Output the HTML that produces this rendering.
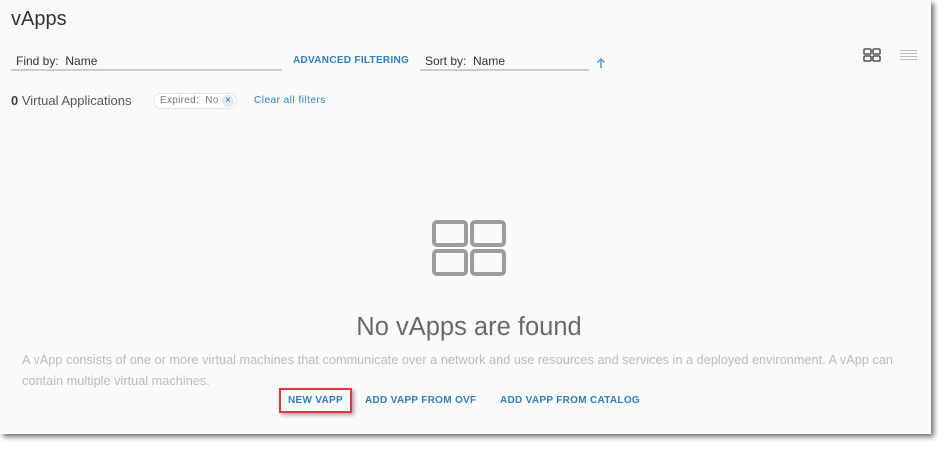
<!DOCTYPE html>
<html><head><meta charset="utf-8"><style>
*{margin:0;padding:0;box-sizing:border-box}
body{width:944px;height:449px;background:#fff;font-family:"Liberation Sans",sans-serif;position:relative;overflow:hidden}
.panel{position:absolute;left:0;top:0;width:931px;height:434px;background:#fafafa;box-shadow:3px 3px 5px rgba(0,0,0,.55)}
.a{position:absolute;white-space:nowrap}
.link{color:#2f7fb8;font-size:10px;letter-spacing:.3px;font-weight:bold}
</style></head><body>
<div class="panel">
<div class="a" style="left:11px;top:8px;font-size:20px;color:#333">vApps</div>
<div class="a" style="left:16px;top:54px;font-size:12px;color:#333">Find by:&nbsp; Name</div>
<div class="a" style="left:11px;top:69px;width:271px;height:2px;background:#ccc"></div>
<div class="a link" style="left:293px;top:55px">ADVANCED FILTERING</div>
<div class="a" style="left:425px;top:54px;font-size:12px;color:#333">Sort by:&nbsp; Name</div>
<div class="a" style="left:420px;top:69px;width:169px;height:2px;background:#ccc"></div>
<svg class="a" style="left:596px;top:57px" width="10" height="12" viewBox="0 0 10 12"><path d="M5 11V2M1.5 5.5L5 2l3.5 3.5" stroke="#4a9ad4" stroke-width="1.5" fill="none"/></svg>
<svg class="a" style="left:863px;top:48px" width="18" height="14" viewBox="0 0 18 14"><g fill="none" stroke="#555" stroke-width="1.6"><rect x="1" y="1" width="7" height="5" rx="1"/><rect x="10" y="1" width="7" height="5" rx="1"/><rect x="1" y="8" width="7" height="5" rx="1"/><rect x="10" y="8" width="7" height="5" rx="1"/></g></svg>
<svg class="a" style="left:900px;top:49px" width="17" height="12" viewBox="0 0 17 12"><g stroke="#bbb" stroke-width="1"><path d="M0 1.5h17M0 4.5h17M0 7.5h17M0 10.5h17"/></g></svg>
<div class="a" style="left:11px;top:93px;font-size:13px;color:#555"><b style="color:#444">0</b> Virtual Applications</div>
<div class="a" style="left:153px;top:93px;width:84px;height:16px;border:1px solid #e4e4e4;border-radius:8px;background:#fff"></div>
<div class="a" style="left:160px;top:95px;font-size:10px;color:#777;letter-spacing:.3px">Expired:&nbsp; No</div>
<div class="a" style="left:222px;top:95px;width:12px;height:12px;border-radius:6px;background:#dcebf5;color:#555;font-size:10px;line-height:12px;text-align:center">×</div>
<div class="a" style="left:254px;top:95px;font-size:10px;color:#2f7fb8;letter-spacing:.5px">Clear all filters</div>
<svg class="a" style="left:431px;top:219px" width="76" height="58" viewBox="0 0 76 58"><g fill="none" stroke="#9c9c9c" stroke-width="4"><rect x="3" y="3" width="32" height="23" rx="3"/><rect x="41" y="3" width="32" height="23" rx="3"/><rect x="3" y="32" width="32" height="23" rx="3"/><rect x="41" y="32" width="32" height="23" rx="3"/></g></svg>
<div class="a" style="left:0;width:938px;top:313px;text-align:center;font-size:25.5px;color:#6a6a6a">No vApps are found</div>
<div class="a" style="left:22px;top:349px;width:890px;white-space:normal;font-size:12.75px;line-height:21px;color:#bbb">A vApp consists of one or more virtual machines that communicate over a network and use resources and services in a deployed environment. A vApp can contain multiple virtual machines.</div>
<div class="a" style="left:279px;top:388px;width:73px;height:25px;border:2px solid #e0383e;box-shadow:2px 2px 4px rgba(0,0,0,.35)"></div>
<div class="a link" style="left:288px;top:395px">NEW VAPP</div>
<div class="a link" style="left:365px;top:395px">ADD VAPP FROM OVF</div>
<div class="a link" style="left:500px;top:395px">ADD VAPP FROM CATALOG</div>
</div>
</body></html>
